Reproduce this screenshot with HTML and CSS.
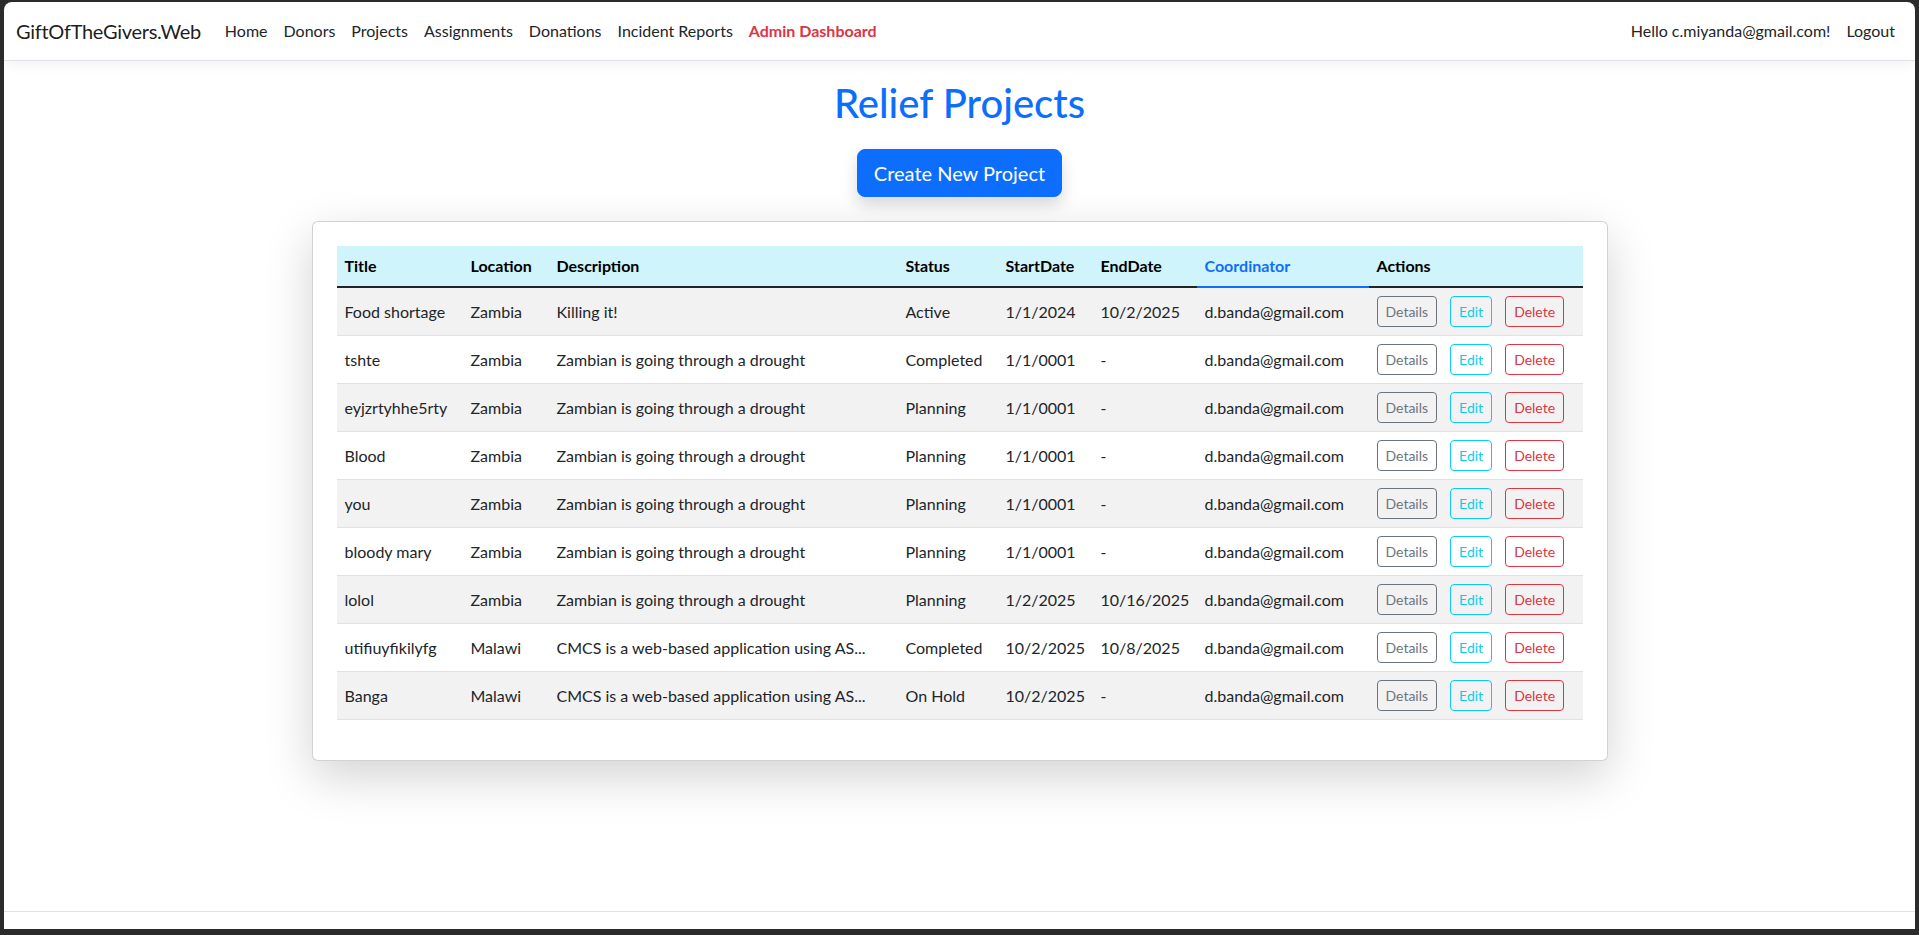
FILE: index.html
```html
<!DOCTYPE html>
<html lang="en">
<head>
<meta charset="utf-8">
<title>Relief Projects - GiftOfTheGivers.Web</title>
<link rel="stylesheet" href="styles.css">
</head>
<body>
<div class="window">
  <header class="navbar">
    <a class="brand" href="#">GiftOfTheGivers.Web</a>
    <nav class="nav-main">
      <a class="nav-link" href="#">Home</a>
      <a class="nav-link" href="#">Donors</a>
      <a class="nav-link" href="#">Projects</a>
      <a class="nav-link" href="#">Assignments</a>
      <a class="nav-link" href="#">Donations</a>
      <a class="nav-link" href="#">Incident Reports</a>
      <a class="nav-link nav-admin" href="#">Admin Dashboard</a>
    </nav>
    <nav class="nav-user">
      <span class="nav-link">Hello c.miyanda@gmail.com!</span>
      <a class="nav-link" href="#">Logout</a>
    </nav>
  </header>

  <main class="main">
    <div class="container">
      <h1 class="page-title">Relief Projects</h1>
      <div class="create-row">
        <a class="btn-create" href="#">Create New Project</a>
      </div>
      <div class="card">
        <table class="table">
          <colgroup>
            <col class="c-title"><col class="c-loc"><col class="c-desc"><col class="c-status">
            <col class="c-start"><col class="c-end"><col class="c-coord"><col class="c-actions">
          </colgroup>
          <thead>
            <tr>
              <th>Title</th><th>Location</th><th>Description</th><th>Status</th>
              <th>StartDate</th><th>EndDate</th><th class="th-active">Coordinator</th><th>Actions</th>
            </tr>
          </thead>
          <tbody>
            <tr class="odd"><td>Food shortage</td><td>Zambia</td><td>Killing it!</td><td>Active</td><td>1/1/2024</td><td>10/2/2025</td><td>d.banda@gmail.com</td>
              <td><div class="acts"><a class="btn-sm b-details" href="#">Details</a><a class="btn-sm b-edit" href="#">Edit</a><a class="btn-sm b-delete" href="#">Delete</a></div></td></tr>
            <tr><td>tshte</td><td>Zambia</td><td>Zambian is going through a drought</td><td>Completed</td><td>1/1/0001</td><td>-</td><td>d.banda@gmail.com</td>
              <td><div class="acts"><a class="btn-sm b-details" href="#">Details</a><a class="btn-sm b-edit" href="#">Edit</a><a class="btn-sm b-delete" href="#">Delete</a></div></td></tr>
            <tr class="odd"><td>eyjzrtyhhe5rty</td><td>Zambia</td><td>Zambian is going through a drought</td><td>Planning</td><td>1/1/0001</td><td>-</td><td>d.banda@gmail.com</td>
              <td><div class="acts"><a class="btn-sm b-details" href="#">Details</a><a class="btn-sm b-edit" href="#">Edit</a><a class="btn-sm b-delete" href="#">Delete</a></div></td></tr>
            <tr><td>Blood</td><td>Zambia</td><td>Zambian is going through a drought</td><td>Planning</td><td>1/1/0001</td><td>-</td><td>d.banda@gmail.com</td>
              <td><div class="acts"><a class="btn-sm b-details" href="#">Details</a><a class="btn-sm b-edit" href="#">Edit</a><a class="btn-sm b-delete" href="#">Delete</a></div></td></tr>
            <tr class="odd"><td>you</td><td>Zambia</td><td>Zambian is going through a drought</td><td>Planning</td><td>1/1/0001</td><td>-</td><td>d.banda@gmail.com</td>
              <td><div class="acts"><a class="btn-sm b-details" href="#">Details</a><a class="btn-sm b-edit" href="#">Edit</a><a class="btn-sm b-delete" href="#">Delete</a></div></td></tr>
            <tr><td>bloody mary</td><td>Zambia</td><td>Zambian is going through a drought</td><td>Planning</td><td>1/1/0001</td><td>-</td><td>d.banda@gmail.com</td>
              <td><div class="acts"><a class="btn-sm b-details" href="#">Details</a><a class="btn-sm b-edit" href="#">Edit</a><a class="btn-sm b-delete" href="#">Delete</a></div></td></tr>
            <tr class="odd"><td>lolol</td><td>Zambia</td><td>Zambian is going through a drought</td><td>Planning</td><td>1/2/2025</td><td>10/16/2025</td><td>d.banda@gmail.com</td>
              <td><div class="acts"><a class="btn-sm b-details" href="#">Details</a><a class="btn-sm b-edit" href="#">Edit</a><a class="btn-sm b-delete" href="#">Delete</a></div></td></tr>
            <tr><td>utifiuyfikilyfg</td><td>Malawi</td><td>CMCS is a web-based application using AS...</td><td>Completed</td><td>10/2/2025</td><td>10/8/2025</td><td>d.banda@gmail.com</td>
              <td><div class="acts"><a class="btn-sm b-details" href="#">Details</a><a class="btn-sm b-edit" href="#">Edit</a><a class="btn-sm b-delete" href="#">Delete</a></div></td></tr>
            <tr class="odd"><td>Banga</td><td>Malawi</td><td>CMCS is a web-based application using AS...</td><td>On Hold</td><td>10/2/2025</td><td>-</td><td>d.banda@gmail.com</td>
              <td><div class="acts"><a class="btn-sm b-details" href="#">Details</a><a class="btn-sm b-edit" href="#">Edit</a><a class="btn-sm b-delete" href="#">Delete</a></div></td></tr>
          </tbody>
        </table>
      </div>
    </div>
  </main>

  <footer class="footer"></footer>
</div>
</body>
</html>
```

FILE: styles.css
```css
* { box-sizing: border-box; }

html, body {
  margin: 0;
  padding: 0;
  background: #2b2b2b;
  height: 935px;
  overflow: hidden;
}

body {
  font-family: "Segoe UI", Lato, "Liberation Sans", sans-serif;
  font-size: 16px;
  line-height: 24px;
  color: #212529;
  padding: 2px 4px 6px 4px;
}

a { text-decoration: none; }

.window {
  height: 927px;
  background: #fff;
  border-radius: 8px 8px 0 0;
  display: flex;
  flex-direction: column;
  overflow: hidden;
}

/* Navbar */
.navbar {
  display: flex;
  align-items: center;
  padding: 9px 12px;
  border-bottom: 1px solid #dee2e6;
  box-shadow: 0 4px 12px rgba(0, 0, 0, 0.05);
  position: relative;
  z-index: 2;
  flex: none;
}

.brand {
  font-size: 20px;
  line-height: 30px;
  padding: 5px 0;
  margin-right: 16px;
  letter-spacing: -0.3px;
  color: rgba(0, 0, 0, 0.9);
}

.nav-main {
  display: flex;
  flex: 1;
}

.nav-user {
  display: flex;
}

.nav-link {
  padding: 8px;
  color: #212529;
  line-height: 24px;
}

.nav-admin {
  color: #dc3545;
  font-weight: 700;
}

/* Main */
.main {
  flex: 1;
  padding-top: 16px;
}

.container {
  width: 1296px;
  margin: 0 auto;
}

.page-title {
  margin: 2px 0 8px;
  text-align: center;
  color: #0d6efd;
  font-size: 40px;
  line-height: 48px;
  font-weight: 500;
}

.create-row {
  display: flex;
  justify-content: center;
  padding-top: 14px;
  margin-bottom: 24px;
}

.btn-create {
  background: #0d6efd;
  color: #fff;
  border: 1px solid #0d6efd;
  border-radius: 8px;
  padding: 8px 16px;
  font-size: 20px;
  line-height: 30px;
  box-shadow: 0 8px 16px rgba(0, 0, 0, 0.15);
}

.card {
  border: 1px solid rgba(0, 0, 0, 0.175);
  border-radius: 6px;
  background: #fff;
  padding: 24px;
  box-shadow: 0 16px 48px rgba(0, 0, 0, 0.175);
}

.table {
  width: 100%;
  table-layout: fixed;
  border-collapse: collapse;
  margin-bottom: 16px;
}

.c-title { width: 126px; }
.c-loc { width: 86px; }
.c-desc { width: 349px; }
.c-status { width: 100px; }
.c-start { width: 95px; }
.c-end { width: 104px; }
.c-coord { width: 172px; }
.c-actions { width: 214px; }

.table th {
  background: #cff4fc;
  color: #000;
  font-weight: 700;
  text-align: left;
  padding: 8px;
  line-height: 24px;
  border-bottom: 2px solid #212529;
  white-space: nowrap;
}

.table th.th-active {
  color: #0d6efd;
  border-bottom-color: #0d6efd;
}

.table td {
  padding: 8px;
  vertical-align: middle;
  border-bottom: 1px solid #dee2e6;
  white-space: nowrap;
  overflow: hidden;
}

.table tr.odd td {
  background: #f2f2f2;
}

.acts {
  display: flex;
  gap: 13px;
}

.btn-sm {
  display: inline-block;
  padding: 4px 8px;
  font-size: 14px;
  line-height: 21px;
  border: 1px solid;
  border-radius: 4px;
  background: transparent;
}

.b-details { color: #6c757d; border-color: #6c757d; }
.b-edit { color: #0dcaf0; border-color: #0dcaf0; }
.b-delete { color: #dc3545; border-color: #dc3545; }

.footer {
  flex: none;
  height: 18px;
  border-top: 1px solid #dee2e6;
}
```
